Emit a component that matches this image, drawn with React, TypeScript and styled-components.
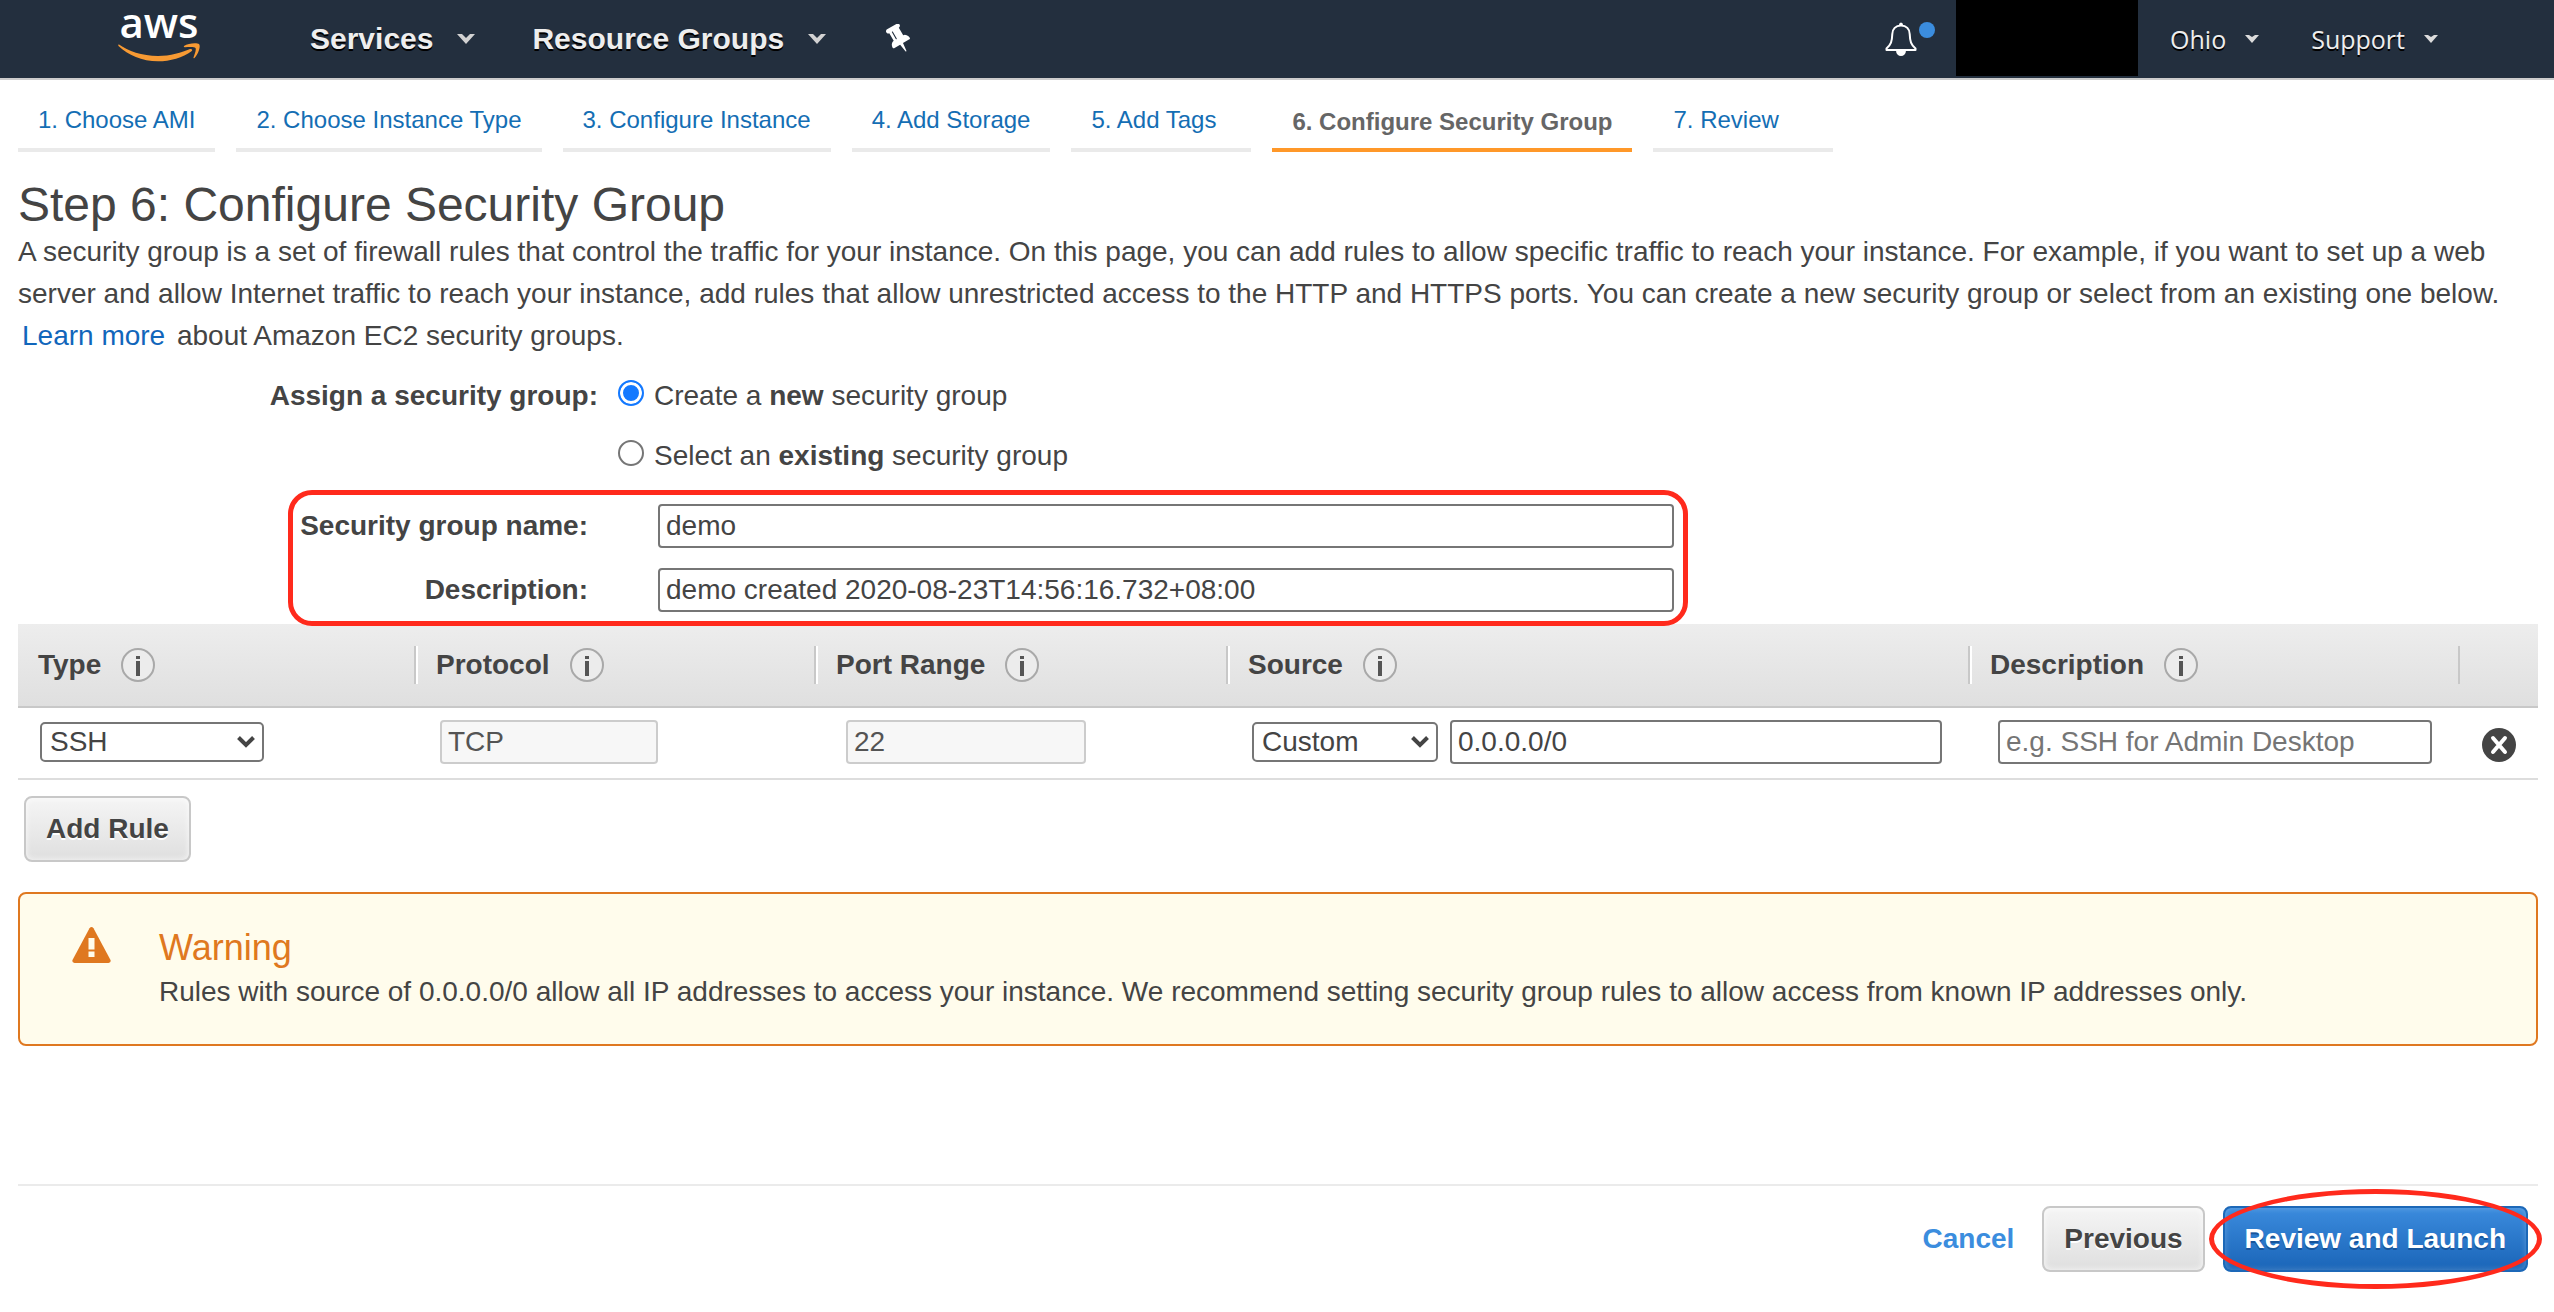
import React, { useState } from "react";
import styled, { createGlobalStyle, css } from "styled-components";

const GlobalStyle = createGlobalStyle`
  *, *::before, *::after { box-sizing: border-box; }
  body {
    margin: 0;
    background: #fff;
    color: #444;
    font-family: "Liberation Sans", Arial, Helvetica, sans-serif;
    font-size: 28px;
    line-height: 42px;
  }
  button, input, select { font: inherit; color: inherit; margin: 0; }
`;

const Page = styled.div`
  display: flex;
  flex-direction: column;
  min-height: 100vh;
`;

/* ---------- Top bar ---------- */

const TopBar = styled.header`
  display: flex;
  align-items: center;
  height: 80px;
  padding: 0 116px 0 118px;
  background: #232f3e;
  border-bottom: 2px solid #ccc;
`;

const LogoLink = styled.a`
  display: flex;
  flex-direction: column;
  align-items: center;
  align-self: flex-start;
  margin-right: 110px;
  color: #fff;
  text-decoration: none;
`;

const LogoText = styled.span`
  font-family: "Open Sans", "Noto Sans", sans-serif;
  font-size: 42px;
  font-weight: 600;
  line-height: 43px;
`;

const MainMenu = styled.nav`
  display: flex;
  align-items: center;
  gap: 57px;
`;

const UserMenu = styled.nav`
  display: flex;
  align-items: center;
  align-self: stretch;
  margin-left: auto;
`;

const MinorMenu = styled.div`
  display: flex;
  gap: 52px;
  margin-left: 32px;
`;

const MenuButton = styled.button<{ $minor?: boolean }>`
  display: flex;
  align-items: center;
  gap: ${(p) => (p.$minor ? 19 : 24)}px;
  padding: 0;
  border: 0;
  background: none;
  color: #eee;
  font-size: 30px;
  font-weight: bold;
  white-space: nowrap;
  text-shadow: 0 2px 0 #000;
  cursor: pointer;
  ${(p) =>
    p.$minor &&
    css`
      font-family: "Open Sans", "Noto Sans", sans-serif;
      font-size: 25px;
      font-weight: normal;
    `}
`;

const IconButton = styled.button`
  display: flex;
  align-items: flex-start;
  gap: 2px;
  padding: 0;
  border: 0;
  background: none;
  cursor: pointer;
`;

const PinButton = styled(IconButton)`
  margin-left: 60px;
`;

const Dot = styled.span`
  width: 16px;
  height: 16px;
  border-radius: 50%;
  background: #3b8dde;
`;

const AccountBlock = styled.div`
  align-self: flex-start;
  width: 182px;
  height: 76px;
  margin-left: 21px;
  background: #000;
`;

/* ---------- Wizard steps ---------- */

const Content = styled.main`
  display: flex;
  flex: 1;
  flex-direction: column;
  padding: 24px 16px 0 18px;
`;

const Steps = styled.nav`
  display: flex;
  gap: 21px;
`;

const StepLink = styled.a<{ $active?: boolean }>`
  min-width: 180px;
  padding: 0 20px 12px;
  border-bottom: 4px solid #eaeaea;
  color: #146eb4;
  font-size: 24px;
  line-height: 32px;
  white-space: nowrap;
  text-decoration: none;
  ${(p) =>
    p.$active &&
    css`
      padding: 2px 20px 10px;
      border-color: #ff9829;
      color: #666;
      font-weight: bold;
    `}
`;

const Title = styled.h1`
  margin: 27px 0 0;
  font-size: 48px;
  font-weight: normal;
  line-height: 52px;
`;

const Intro = styled.p`
  margin: 0;
`;

const TextLink = styled.a`
  padding: 0 4px;
  color: #1166bb;
  text-decoration: none;
`;

/* ---------- Form ---------- */

const AssignRow = styled.div`
  display: grid;
  grid-template-columns: 580px auto;
  column-gap: 20px;
  margin-top: 19px;
  line-height: 40px;
`;

const AssignLabel = styled.span`
  font-weight: bold;
  text-align: right;
`;

const RadioList = styled.div`
  display: flex;
  flex-direction: column;
  gap: 20px;
`;

const RadioLabel = styled.label`
  display: flex;
  align-items: center;
  gap: 10px;
`;

const Radio = styled.input`
  appearance: none;
  flex: none;
  width: 26px;
  height: 26px;
  margin: 0 0 6px;
  border: 2px solid #767676;
  border-radius: 50%;
  background: #fff;
  &:checked {
    border-color: #1479ff;
    background: #1479ff;
    box-shadow: inset 0 0 0 3px #fff;
  }
`;

const GroupFields = styled.div`
  position: relative;
  display: grid;
  grid-template-columns: 290px minmax(0, 1016px);
  gap: 20px 70px;
  align-items: center;
  margin: 28px 0 12px 280px;
  max-width: 1376px;
  &::after {
    content: "";
    position: absolute;
    inset: -14px -14px -14px -10px;
    border: 5px solid #ff2a1c;
    border-radius: 24px;
    pointer-events: none;
  }
`;

const FieldLabel = styled.label`
  font-weight: bold;
  text-align: right;
  white-space: nowrap;
`;

const TextInput = styled.input<{ $width?: number }>`
  display: block;
  width: ${(p) => (p.$width ? `${p.$width}px` : "100%")};
  min-width: 0;
  height: 44px;
  padding: 0 6px;
  border: 2px solid #767676;
  border-radius: 4px;
  background: #fff;
  outline: none;
  &::placeholder { color: #757575; opacity: 1; }
  &:disabled {
    border-color: #ccc;
    background: #f7f7f7;
    color: #545454;
  }
`;

const SelectBox = styled.div<{ $width: number }>`
  display: grid;
  flex: none;
  align-items: center;
  width: ${(p) => p.$width}px;
  & > * { grid-area: 1 / 1; }
  & > svg {
    justify-self: end;
    margin-right: 8px;
    pointer-events: none;
  }
`;

const Select = styled.select`
  appearance: none;
  width: 100%;
  height: 40px;
  padding: 0 36px 0 8px;
  border: 2px solid #767676;
  border-radius: 5px;
  background: #fff;
  line-height: 36px;
`;

/* ---------- Rules table ---------- */

const RulesTable = styled.table`
  width: 100%;
  border-collapse: separate;
  border-spacing: 0;
  table-layout: fixed;
`;

const Col = styled.col<{ $width?: number }>`
  width: ${(p) => (p.$width ? `${p.$width}px` : "auto")};
`;

const HeadRow = styled.tr`
  background: linear-gradient(#ededed, #dfdfdf);
`;

const HeadCell = styled.th`
  padding: 22px 0;
  border-bottom: 2px solid #c8c8c8;
  text-align: left;
`;

const HeadLabel = styled.div<{ $last?: boolean }>`
  display: flex;
  align-items: center;
  gap: 20px;
  height: 38px;
  padding-left: 20px;
  border-right: 2px solid #c8c8c8;
  box-shadow: ${(p) => (p.$last ? "none" : "2px 0 0 #fff")};
`;

const Cell = styled.td<{ $inset?: number }>`
  padding: 12px 28px 14px ${(p) => p.$inset ?? 24}px;
  border-bottom: 2px solid #ddd;
`;

const RemoveCell = styled(Cell)`
  padding: 18px 0 14px 22px;
`;

const SourceFields = styled.div`
  display: flex;
  align-items: center;
  gap: 12px;
`;

/* ---------- Buttons ---------- */

const Button = styled.button<{ $primary?: boolean }>`
  height: 66px;
  padding: 0 20px;
  border: 2px solid #c8c8c8;
  border-radius: 8px;
  background: linear-gradient(#f5f5f5, #dfdfdf);
  box-shadow: inset 0 0 6px rgba(255, 255, 255, 0.8);
  color: #444;
  font-weight: bold;
  white-space: nowrap;
  text-shadow: 0 2px 0 #fff;
  cursor: pointer;
  ${(p) =>
    p.$primary &&
    css`
      border-color: #1c68b8;
      background: linear-gradient(#3b8bdd, #1a65b8);
      box-shadow: inset 0 0 6px rgba(255, 255, 255, 0.25);
      color: #fff;
      text-shadow: 0 2px 0 #17549b;
    `}
`;

const AddRow = styled.div`
  padding: 16px 6px 30px;
`;

const PlainButton = styled.button`
  padding: 0;
  border: 0;
  margin-right: 10px;
  background: none;
  color: #3b8dde;
  font-weight: bold;
  cursor: pointer;
`;

/* ---------- Warning ---------- */

const WarningBox = styled.section`
  display: flex;
  align-items: flex-start;
  gap: 48px;
  padding: 32px 52px 30px;
  margin-bottom: 40px;
  border: 2px solid #df7820;
  border-radius: 8px;
  background: #fffcec;
  line-height: 44px;
`;

const WarningTitle = styled.h2`
  margin: 0;
  color: #df7820;
  font-size: 36px;
  font-weight: normal;
`;

const WarningText = styled.p`
  margin: 0;
`;

/* ---------- Footer ---------- */

const Footer = styled.footer`
  display: flex;
  align-items: center;
  justify-content: flex-end;
  gap: 18px;
  margin-top: auto;
  padding: 20px 10px 40px 0;
  border-top: 2px solid #ebebeb;
`;

const Circled = styled.div`
  position: relative;
  display: flex;
  &::after {
    content: "";
    position: absolute;
    inset: -17px -14px;
    border: 5px solid #ff2a1c;
    border-radius: 50%;
    pointer-events: none;
  }
`;

/* ---------- Icons ---------- */

const Swoosh = () => (
  <svg width="82" height="20" viewBox="0 0 82 20" fill="#f79a33" aria-hidden="true">
    <path d="M1 1.5C10 8 24 13 40 13C52 13 64 9.500 72 6C74 5.500 75 7 73.500 8.200C65 14.500 52 18.300 40 18.300C24 18.300 10 12 .5 3C0 2 .3 1.200 1 1.500Z" />
    <path d="M66 3C70 0 79-.5 81 1C83 3 80.500 11 76.500 15C75.800 15.600 75.200 15.200 75.500 14.400C76.500 11.800 78.500 6.500 77.500 5C76.500 3.600 71 4 67 4.300C66 4.400 65.500 3.700 66 3Z" />
  </svg>
);

const MenuCaret = () => (
  <svg width="18" height="10" viewBox="0 0 18 10" aria-hidden="true">
    <path d="M0 0h5l4 4 4-4h5L9 10z" fill="#d2d2d2" />
  </svg>
);

const SmallCaret = () => (
  <svg width="14" height="8" viewBox="0 0 14 8" aria-hidden="true">
    <path d="M0 0h4l3 2 3-2h4L7 8z" fill="#dcdcdc" />
  </svg>
);

const PinIcon = () => (
  <svg width="26" height="30" viewBox="0 0 26 30" aria-hidden="true">
    <g transform="translate(13 15) rotate(-30) scale(0.0172) translate(-576 -960)">
      <path
        fill="#fff"
        d="M480 864v-448q0-14-9-23t-23-9-23 9-9 23v448q0 14 9 23t23 9 23-9 9-23zm672 352q0 26-19 45t-45 19h-429l-51 483q-2 12-10.500 20.500t-20.500 8.500h-1q-27 0-32-27l-76-485h-404q-26 0-45-19t-19-45q0-123 78.500-221.500t177.500-98.500v-512q-52 0-90-38t-38-90 38-90 90-38h640q52 0 90 38t38 90-38 90-90 38v512q99 0 177.500 98.500t78.500 221.500z"
      />
    </g>
  </svg>
);

const BellIcon = () => (
  <svg width="32" height="34" viewBox="0 0 32 34" fill="none" aria-hidden="true">
    <path
      d="M16 3.500C10.500 3.500 7.500 7 7.300 12C7 19.500 6 22.500 1.500 26.500V28H30.500V26.500C26 22.500 25 19.500 24.700 12C24.500 7 21.500 3.500 16 3.500Z"
      stroke="#fff"
      strokeWidth="2"
      strokeLinejoin="round"
    />
    <path d="M14 3a2 2.500 0 0 1 4 0zM11 28.500h10a5 5.500 0 0 1-10 0z" fill="#fff" />
  </svg>
);

const InfoIcon = () => (
  <svg width="34" height="34" viewBox="0 0 34 34" role="img" aria-label="Info">
    <circle cx="17" cy="17" r="16" fill="#ececec" stroke="#a9a9a9" strokeWidth="2" />
    <path d="M15 8h4v3h-4zM15 13h4v15h-4z" fill="#555" />
  </svg>
);

const SelectArrow = () => (
  <svg width="20" height="14" viewBox="0 0 20 14" aria-hidden="true">
    <path d="M2.500 2.500L10 10l7.500-7.500" fill="none" stroke="#444" strokeWidth="4" />
  </svg>
);

const RemoveIcon = () => (
  <svg width="34" height="34" viewBox="0 0 34 34" aria-hidden="true">
    <circle cx="17" cy="17" r="17" fill="#444" />
    <path d="M11 10l12 14M23 10l-12 14" stroke="#fff" strokeWidth="4" strokeLinecap="round" />
  </svg>
);

const WarningIcon = () => (
  <svg width="39" height="38" viewBox="0 0 39 38" aria-hidden="true">
    <path
      d="M17.500 2.200q2-2.500 4 0L38.500 34q.8 2.800-2 3H2.500q-2.800-.2-2-3z"
      fill="#df7820"
    />
    <path d="M16.500 12h6v11.500h-6zM16.500 25.500h6v5.500h-6z" fill="#fffcec" />
  </svg>
);

/* ---------- Page ---------- */

const steps = [
  "1. Choose AMI",
  "2. Choose Instance Type",
  "3. Configure Instance",
  "4. Add Storage",
  "5. Add Tags",
  "6. Configure Security Group",
  "7. Review",
];
const activeStep = 5;

const columns: { title?: string; width?: number }[] = [
  { title: "Type", width: 398 },
  { title: "Protocol", width: 400 },
  { title: "Port Range", width: 412 },
  { title: "Source" },
  { title: "Description", width: 490 },
  { width: 78 },
];

export default function App() {
  const [mode, setMode] = useState("new");

  return (
    <Page>
      <GlobalStyle />
      <TopBar>
        <LogoLink href="#">
          <LogoText>aws</LogoText>
          <Swoosh />
        </LogoLink>
        <MainMenu>
          <MenuButton>
            Services <MenuCaret />
          </MenuButton>
          <MenuButton>
            Resource Groups <MenuCaret />
          </MenuButton>
        </MainMenu>
        <PinButton aria-label="Pin shortcuts">
          <PinIcon />
        </PinButton>
        <UserMenu>
          <IconButton aria-label="Notifications">
            <BellIcon />
            <Dot />
          </IconButton>
          <AccountBlock />
          <MinorMenu>
            <MenuButton $minor>
              Ohio <SmallCaret />
            </MenuButton>
            <MenuButton $minor>
              Support <SmallCaret />
            </MenuButton>
          </MinorMenu>
        </UserMenu>
      </TopBar>

      <Content>
        <Steps>
          {steps.map((step, i) => (
            <StepLink
              key={step}
              href="#"
              $active={i === activeStep}
              aria-current={i === activeStep ? "step" : undefined}
            >
              {step}
            </StepLink>
          ))}
        </Steps>

        <Title>Step 6: Configure Security Group</Title>
        <Intro>
          A security group is a set of firewall rules that control the traffic for your instance.
          On this page, you can add rules to allow specific traffic to reach your instance. For
          example, if you want to set up a web server and allow Internet traffic to reach your
          instance, add rules that allow unrestricted access to the HTTP and HTTPS ports. You can
          create a new security group or select from an existing one below.{" "}
          <TextLink href="#">Learn more</TextLink> about Amazon EC2 security groups.
        </Intro>

        <AssignRow role="radiogroup" aria-labelledby="assign-label">
          <AssignLabel id="assign-label">Assign a security group:</AssignLabel>
          <RadioList>
            <RadioLabel>
              <Radio
                type="radio"
                name="mode"
                checked={mode === "new"}
                onChange={() => setMode("new")}
              />
              <span>
                Create a <b>new</b> security group
              </span>
            </RadioLabel>
            <RadioLabel>
              <Radio
                type="radio"
                name="mode"
                checked={mode === "existing"}
                onChange={() => setMode("existing")}
              />
              <span>
                Select an <b>existing</b> security group
              </span>
            </RadioLabel>
          </RadioList>
        </AssignRow>

        <GroupFields>
          <FieldLabel htmlFor="group-name">Security group name:</FieldLabel>
          <TextInput id="group-name" defaultValue="demo" />
          <FieldLabel htmlFor="group-description">Description:</FieldLabel>
          <TextInput
            id="group-description"
            defaultValue="demo created 2020-08-23T14:56:16.732+08:00"
          />
        </GroupFields>

        <RulesTable>
          <colgroup>
            {columns.map((c, i) => (
              <Col key={i} $width={c.width} />
            ))}
          </colgroup>
          <thead>
            <HeadRow>
              {columns.map((c, i) => (
                <HeadCell key={i}>
                  {c.title && (
                    <HeadLabel $last={i === columns.length - 2}>
                      {c.title} <InfoIcon />
                    </HeadLabel>
                  )}
                </HeadCell>
              ))}
            </HeadRow>
          </thead>
          <tbody>
            <tr>
              <Cell $inset={22}>
                <SelectBox $width={224}>
                  <Select aria-label="Type" defaultValue="SSH">
                    <option>SSH</option>
                  </Select>
                  <SelectArrow />
                </SelectBox>
              </Cell>
              <Cell>
                <TextInput aria-label="Protocol" $width={218} defaultValue="TCP" disabled />
              </Cell>
              <Cell $inset={30}>
                <TextInput aria-label="Port Range" $width={240} defaultValue="22" disabled />
              </Cell>
              <Cell>
                <SourceFields>
                  <SelectBox $width={186}>
                    <Select aria-label="Source" defaultValue="Custom">
                      <option>Custom</option>
                    </Select>
                    <SelectArrow />
                  </SelectBox>
                  <TextInput aria-label="Source address" defaultValue="0.0.0.0/0" />
                </SourceFields>
              </Cell>
              <Cell $inset={28}>
                <TextInput aria-label="Description" placeholder="e.g. SSH for Admin Desktop" />
              </Cell>
              <RemoveCell>
                <IconButton aria-label="Remove rule">
                  <RemoveIcon />
                </IconButton>
              </RemoveCell>
            </tr>
          </tbody>
        </RulesTable>

        <AddRow>
          <Button>Add Rule</Button>
        </AddRow>

        <WarningBox>
          <WarningIcon />
          <div>
            <WarningTitle>Warning</WarningTitle>
            <WarningText>
              Rules with source of 0.0.0.0/0 allow all IP addresses to access your instance. We
              recommend setting security group rules to allow access from known IP addresses only.
            </WarningText>
          </div>
        </WarningBox>

        <Footer>
          <PlainButton>Cancel</PlainButton>
          <Button>Previous</Button>
          <Circled>
            <Button $primary>Review and Launch</Button>
          </Circled>
        </Footer>
      </Content>
    </Page>
  );
}
